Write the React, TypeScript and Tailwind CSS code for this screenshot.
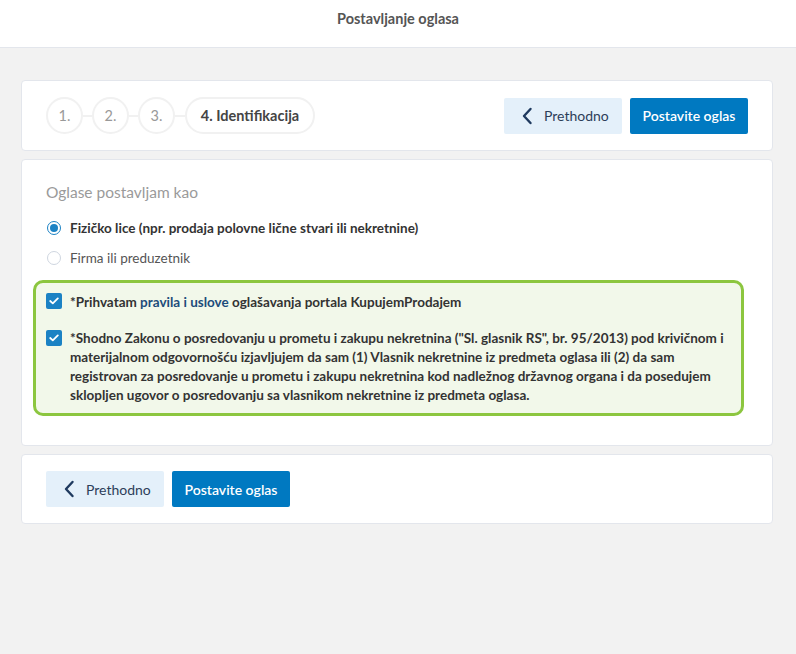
import React from "react";

const font = { fontFamily: 'Lato, "Noto Sans", sans-serif' };

function Chevron() {
  return (
    <svg width="12" height="18" viewBox="0 0 12 18" fill="none">
      <path d="M9.5 2 L3 9 L9.5 16" stroke="#1f3a5f" strokeWidth="2.4" strokeLinecap="round" strokeLinejoin="round" />
    </svg>
  );
}

function Buttons() {
  return (
    <div className="flex gap-2">
      <button className="flex items-center h-9 w-[118px] rounded-[2px] bg-[#e4f0fa] pl-[17px] text-[14px] text-[#2d3e59]">
        <Chevron />
        <span className="ml-[11px]">Prethodno</span>
      </button>
      <button className="h-9 w-[118px] rounded-[2px] bg-[#0079c1] text-[14px] font-semibold text-white">
        Postavite oglas
      </button>
    </div>
  );
}

function Check() {
  return (
    <span className="mt-[1px] flex h-4 w-4 shrink-0 items-center justify-center rounded-[2px] bg-[#1b82c4]">
      <svg width="10" height="8" viewBox="0 0 10 8" fill="none">
        <path d="M1.2 4 L3.8 6.4 L8.8 1.4" stroke="white" strokeWidth="1.8" strokeLinecap="round" strokeLinejoin="round" />
      </svg>
    </span>
  );
}

export default function App() {
  return (
    <div className="min-h-[654px] bg-[#f2f2f2]" style={font}>
      <div className="flex h-[48px] items-center justify-center border-b border-[#e3e6ec] bg-white pb-[10px]">
        <span className="text-[14.5px] font-bold text-[#555]">Postavljanje oglasa</span>
      </div>
      <div className="pl-[21px] pr-[23px] pt-[32px] flex flex-col gap-2">
        <div className="flex items-center justify-between rounded-[4px] border border-[#e3e6ec] bg-white py-4 pl-6 pr-6">
          <div className="flex items-center">
            <div className="flex h-[37px] w-[37px] items-center justify-center rounded-full border-2 border-[#f1f1f1] text-[14.5px] text-[#999]">1.</div>
            <div className="h-[2px] w-[9px] bg-[#f1f1f1]" />
            <div className="flex h-[37px] w-[37px] items-center justify-center rounded-full border-2 border-[#f1f1f1] text-[14.5px] text-[#999]">2.</div>
            <div className="h-[2px] w-[9px] bg-[#f1f1f1]" />
            <div className="flex h-[37px] w-[37px] items-center justify-center rounded-full border-2 border-[#f1f1f1] text-[14.5px] text-[#999]">3.</div>
            <div className="h-[2px] w-[10px] bg-[#f1f1f1]" />
            <div className="flex h-[37px] w-[130px] items-center justify-center rounded-full border-2 border-[#f1f1f1] text-[14.5px] font-bold text-[#444]">4. Identifikacija</div>
          </div>
          <Buttons />
        </div>

        <div className="rounded-[4px] border border-[#e3e6ec] bg-white pb-[29px] pl-[11px] pr-[28px] pt-[21px]">
          <div className="pl-[13px] text-[15.5px] text-[#9a9a9a]">Oglase postavljam kao</div>
          <div className="mt-[14px] flex items-center pl-[14px]">
            <span className="flex h-[14px] w-[14px] items-center justify-center rounded-full border-[1.5px] border-[#1b82c4]">
              <span className="h-[8px] w-[8px] rounded-full bg-[#1b82c4]" />
            </span>
            <span className="ml-[9px] text-[13.5px] font-bold text-[#333]">Fizičko lice (npr. prodaja polovne lične stvari ili nekretnine)</span>
          </div>
          <div className="mt-[9px] flex items-center pl-[14px]">
            <span className="h-[14px] w-[14px] rounded-full border border-[#cfd6e0]" />
            <span className="ml-[9px] text-[13.5px] text-[#555]">Firma ili preduzetnik</span>
          </div>
          <div className="mt-[12px] rounded-[10px] border-[3px] border-[#8cc63f] bg-[#f2f8ea] pb-[8px] pl-[10px] pr-[14px] pt-[9px]">
            <div className="flex gap-2 text-[13.5px] font-bold text-[#333]">
              <Check />
              <span>
                *Prihvatam <span className="text-[#1d4c7a]">pravila i uslove</span> oglašavanja portala KupujemProdajem
              </span>
            </div>
            <div className="mt-[17px] flex gap-2 text-[13.5px] font-bold leading-[19px] text-[#333]">
              <Check />
              <span>
                *Shodno Zakonu o posredovanju u prometu i zakupu nekretnina ("Sl. glasnik RS", br. 95/2013) pod krivičnom i materijalnom odgovornošću izjavljujem da sam (1) Vlasnik nekretnine iz predmeta oglasa ili (2) da sam registrovan za posredovanje u prometu i zakupu nekretnina kod nadležnog državnog organa i da posedujem sklopljen ugovor o posredovanju sa vlasnikom nekretnine iz predmeta oglasa.
              </span>
            </div>
          </div>
        </div>

        <div className="rounded-[4px] border border-[#e3e6ec] bg-white py-4 pl-6">
          <Buttons />
        </div>
      </div>
    </div>
  );
}
